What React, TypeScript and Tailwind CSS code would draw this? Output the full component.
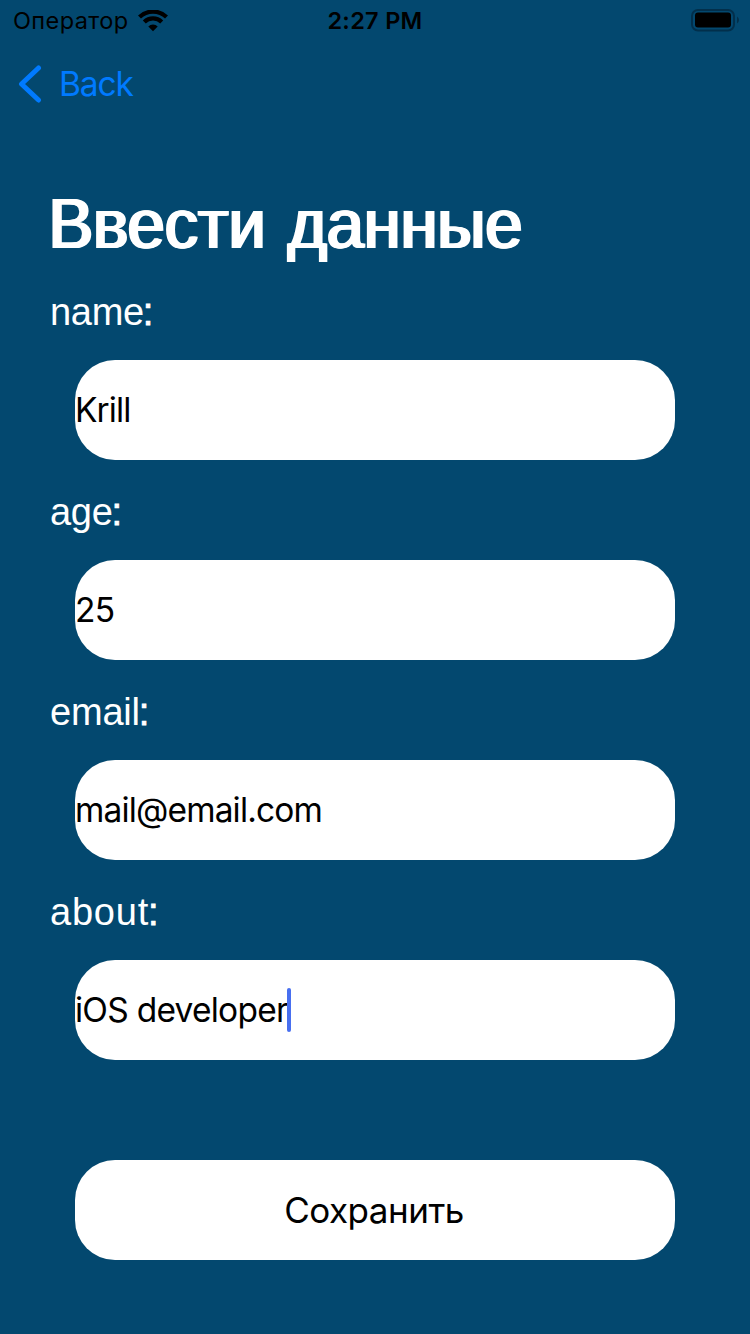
type FieldProps = { label: string; value: string; labelClass: string; valueClass: string; focused?: boolean };

const fields: FieldProps[] = [
  { label: 'name', value: 'Krill', labelClass: 'tracking-[-0.3px]', valueClass: 'tracking-[-0.9px]' },
  { label: 'age', value: '25', labelClass: 'tracking-[-0.3px]', valueClass: 'tracking-[-0.8px]' },
  { label: 'email', value: 'mail@email.com', labelClass: 'tracking-[-0.2px]', valueClass: 'tracking-[-0.85px]' },
  { label: 'about', value: 'iOS developer', labelClass: 'tracking-[0.8px]', valueClass: 'tracking-[-0.75px]', focused: true },
];

function StatusBar() {
  return (
    <header className="grid h-10 grid-cols-3 items-center pl-[13px] pr-[10px] pt-px text-[23.5px] leading-10 text-black">
      <div className="flex items-center gap-[9px]">
        <span className="tracking-[0.4px]">Оператор</span>
        <svg width="30" height="22" viewBox="0 0 30 22" fill="none" stroke="#000" strokeWidth="4.2">
          <path d="M1.5 7.1 A19.2 19.2 0 0 1 28.5 7.1" />
          <path d="M6.3 12 A12.4 12.4 0 0 1 23.7 12" />
          <path d="M15 21.2 L10.3 16.5 A6.8 6.8 0 0 1 19.7 16.5 Z" fill="#000" stroke="none" />
        </svg>
      </div>
      <span className="-ml-[3px] text-center font-semibold tracking-[0.3px]">2:27 PM</span>
      <div className="flex justify-end">
        <svg width="49" height="24" viewBox="0 0 49 24">
          <rect x="1" y="1" width="42" height="20.5" rx="6" fill="none" stroke="#022f4b" strokeWidth="2" />
          <rect x="4" y="3.5" width="36" height="15" rx="3" fill="#000" />
          <path d="M46 7.5 Q48 8.5 48 11 Q48 13.5 46 14.5 Z" fill="#022f4b" />
        </svg>
      </div>
    </header>
  );
}

function Field({ label, value, labelClass, valueClass, focused }: FieldProps) {
  return (
    <div className="h-[200px]">
      <div className="flex h-[74px] items-center pl-[50px] font-['Liberation_Sans',sans-serif] text-[38px] text-white">
        <span className={labelClass}>{label}</span>
        <span className="-ml-px [-webkit-text-stroke:0.8px_#fff]">:</span>
      </div>
      <div className="mx-[75px] mt-[11px] flex h-[100px] items-center rounded-[40px] bg-white text-[33.5px] text-black">
        <span className={valueClass}>{value}</span>
        {focused && <span className="-ml-px h-11 w-1 rounded-sm bg-[#476ff0]" />}
      </div>
    </div>
  );
}

export default function App() {
  return (
    <main className="flex h-[1334px] w-[750px] flex-col overflow-hidden bg-[#03486f] font-['Inter',sans-serif]">
      <StatusBar />
      <nav className="flex h-[88px] items-center pl-[18px] text-[33.5px] text-[#007aff]">
        <svg width="24" height="38" viewBox="0 0 24 38" fill="none" stroke="currentColor" strokeWidth="5" strokeLinecap="round" strokeLinejoin="round">
          <path d="M20.5 3 L3.5 19 L20.5 35" />
        </svg>
        <span className="ml-[17px] mt-px tracking-[-1.1px]">Back</span>
      </nav>
      <h1 className="ml-[47px] mt-[56px] flex h-[80px] origin-left scale-x-[0.959] items-center font-['Liberation_Sans',sans-serif] text-[70px] tracking-[-0.3px] [word-spacing:4px] text-white [text-shadow:1px_0_#fff,2px_0_#fff,3px_0_#fff]">
        <span>Ввести данные</span>
      </h1>
      <div className="mt-[11px]">
        {fields.map((f) => (
          <Field key={f.label} {...f} />
        ))}
      </div>
      <button className="mx-[75px] mt-[85px] flex h-[100px] shrink-0 items-center justify-center rounded-[40px] bg-white pr-0.5 text-[35px] tracking-[-0.5px] text-black">
        Сохранить
      </button>
    </main>
  );
}
